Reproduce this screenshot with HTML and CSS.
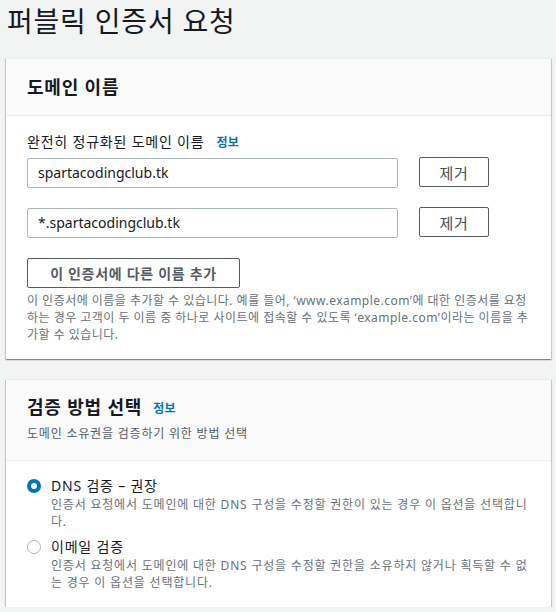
FILE: index.html
```html
<!DOCTYPE html>
<html lang="ko">
<head>
<meta charset="utf-8">
<link rel="stylesheet" href="styles.css">
</head>
<body>
<h1 class="page-title">퍼블릭 인증서 요청</h1>

<section class="card">
  <div class="card-header">
    <h2 class="card-title">도메인 이름</h2>
  </div>
  <div class="card-body">
    <div class="field-label">완전히 정규화된 도메인 이름<a class="info">정보</a></div>
    <div class="row">
      <div class="input">spartacodingclub.tk</div>
      <button class="btn btn-remove">제거</button>
    </div>
    <div class="row">
      <div class="input">*.spartacodingclub.tk</div>
      <button class="btn btn-remove">제거</button>
    </div>
    <button class="btn btn-add">이 인증서에 다른 이름 추가</button>
    <p class="hint">이 인증서에 이름을 추가할 수 있습니다. 예를 들어, ‘www.example.com’에 대한 인증서를 요청하는 경우 고객이 두 이름 중 하나로 사이트에 접속할 수 있도록 ‘example.com’이라는 이름을 추가할 수 있습니다.</p>
  </div>
</section>

<section class="card card-second">
  <div class="card-header">
    <h2 class="card-title">검증 방법 선택<a class="info">정보</a></h2>
    <p class="card-desc">도메인 소유권을 검증하기 위한 방법 선택</p>
  </div>
  <div class="card-body radios">
    <div class="radio-item">
      <span class="radio checked"></span>
      <div class="radio-text">
        <div class="radio-label">DNS 검증 – 권장</div>
        <div class="radio-desc">인증서 요청에서 도메인에 대한 DNS 구성을 수정할 권한이 있는 경우 이 옵션을 선택합니다.</div>
      </div>
    </div>
    <div class="radio-item">
      <span class="radio"></span>
      <div class="radio-text">
        <div class="radio-label">이메일 검증</div>
        <div class="radio-desc">인증서 요청에서 도메인에 대한 DNS 구성을 수정할 권한을 소유하지 않거나 획득할 수 없는 경우 이 옵션을 선택합니다.</div>
      </div>
    </div>
  </div>
</section>
</body>
</html>
```

FILE: styles.css
```css
* { box-sizing: border-box; }
html, body { margin: 0; padding: 0; }
body {
  background: #f2f3f3;
  font-family: "Noto Sans", "Noto Sans CJK KR", sans-serif;
  color: #16191f;
  padding: 0 5px 0 6px;
  letter-spacing: 0.05em;
}
.page-title {
  margin: 0;
  padding: 1px 0 0 1px;
  font-size: 28px;
  font-weight: 400;
  line-height: 40px;
  height: 58px;
}
.card {
  background: #fff;
  box-shadow: 0 1px 1px 0 rgba(0,28,36,.3), 1px 1px 1px 0 rgba(0,28,36,.15), -1px 1px 1px 0 rgba(0,28,36,.15);
  border-top: 1px solid #eaeded;
}
.card-second { margin-top: 20px; }
.card-header {
  background: #fafafa;
  border-bottom: 1px solid #eaeded;
  padding: 17px 20px 17px 21px;
}
.card-second .card-header { padding-top: 16px; }
.card-title {
  margin: 0;
  font-size: 18px;
  font-weight: 700;
  line-height: 22px;
}
.card-desc {
  margin: 5px 0 0;
  font-size: 12px;
  line-height: 18px;
  color: #545b64;
}
.info {
  color: #0073bb;
  font-size: 12px;
  font-weight: 700;
  margin-left: 11px;
  vertical-align: 1px;
  letter-spacing: 0.02em;
}
.card-body {
  padding: 15px 20px 16px 21px;
}
.field-label {
  font-size: 14px;
  line-height: 22px;
  color: #16191f;
  margin-bottom: 4px;
}
.field-label .info { margin-left: 12px; vertical-align: 0; }
.row {
  display: flex;
  gap: 21px;
  margin-bottom: 20px;
}
.input {
  width: 371px;
  height: 30px;
  border: 1px solid #aab7b8;
  border-radius: 2px;
  padding: 0 10px;
  font-size: 14px;
  line-height: 28px;
  color: #16191f;
  letter-spacing: 0;
}
.btn {
  font-family: inherit;
  letter-spacing: 0.05em;
  background: #fff;
  border: 1px solid #545b64;
  border-radius: 2px;
  color: #545b64;
  font-weight: 700;
  font-size: 14px;
  height: 30px;
  padding: 0;
  cursor: pointer;
}
.btn-remove { width: 70px; margin-top: -1px; font-weight: 400; font-size: 15px; color: #444b53; }
.btn-add { width: 213px; }
.hint {
  margin: 4px 0 0;
  font-size: 12px;
  line-height: 17px;
  color: #687078;
  letter-spacing: 0.04em;
}
.radios { padding-top: 15px; padding-bottom: 16px; }
.radio-item {
  display: flex;
  gap: 10px;
  margin-bottom: 7px;
}
.radio-item:last-child { margin-bottom: 0; }
.radio {
  flex: none;
  width: 14px;
  height: 14px;
  border-radius: 50%;
  border: 1px solid #aab7b8;
  margin-top: 3px;
  background: #fff;
}
.radio.checked {
  border: 4px solid #0073bb;
}
.radio-label {
  font-size: 14px;
  line-height: 20px;
}
.radio-desc {
  font-size: 12px;
  line-height: 17px;
  color: #687078;
}
```
